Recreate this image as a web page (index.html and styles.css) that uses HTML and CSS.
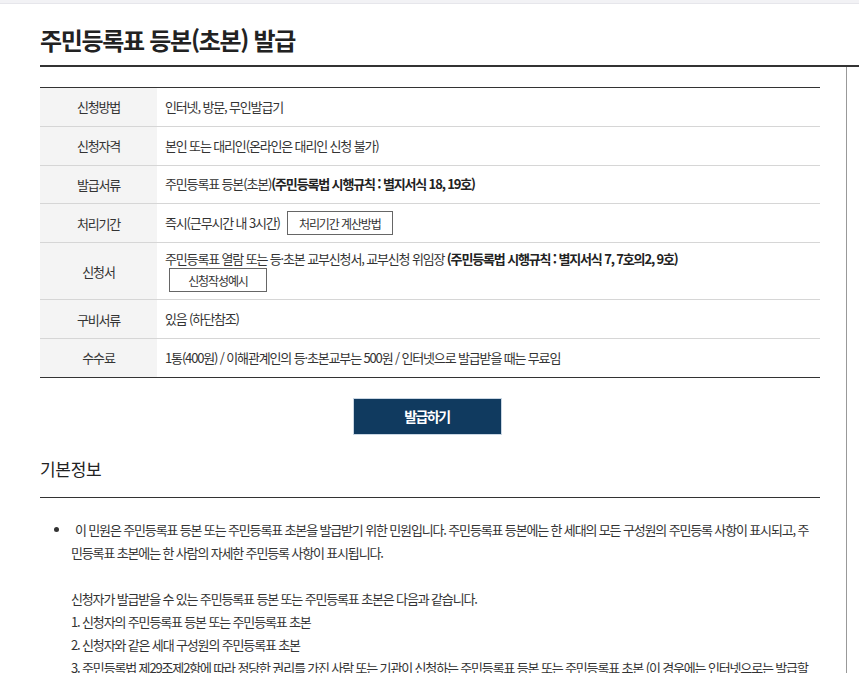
FILE: index.html
```html
<!DOCTYPE html>
<html lang="ko">
<head>
<meta charset="utf-8">
<title>주민등록표 등본(초본) 발급</title>
<link rel="stylesheet" href="styles.css">
</head>
<body>
<div class="topbar"></div>
<header class="page-head">
  <h1 class="page-title">주민등록표 등본(초본) 발급</h1>
</header>
<main class="main">
  <div class="content">
    <div class="info-table">
      <div class="row">
        <div class="label">신청방법</div>
        <div class="value">인터넷, 방문, 무인발급기</div>
      </div>
      <div class="row">
        <div class="label">신청자격</div>
        <div class="value">본인 또는 대리인(온라인은 대리인 신청 불가)</div>
      </div>
      <div class="row">
        <div class="label">발급서류</div>
        <div class="value">주민등록표 등본(초본) <b>(주민등록법 시행규칙 : 별지서식 18, 19호)</b></div>
      </div>
      <div class="row">
        <div class="label">처리기간</div>
        <div class="value">즉시(근무시간 내 3시간) <button class="btn-line btn-calc">처리기간 계산방법</button></div>
      </div>
      <div class="row row-tall">
        <div class="label">신청서</div>
        <div class="value value-stack">
          <div>주민등록표 열람 또는 등·초본 교부신청서, 교부신청 위임장 <b>(주민등록법 시행규칙 : 별지서식 7, 7호의2, 9호)</b></div>
          <button class="btn-line btn-sample">신청작성예시</button>
        </div>
      </div>
      <div class="row">
        <div class="label">구비서류</div>
        <div class="value">있음 (하단참조)</div>
      </div>
      <div class="row row-last">
        <div class="label">수수료</div>
        <div class="value">1통(400원) / 이해관계인의 등·초본교부는 500원 / 인터넷으로 발급받을 때는 무료임</div>
      </div>
    </div>

    <div class="action">
      <button class="btn-issue">발급하기</button>
    </div>

    <h2 class="section-title">기본정보</h2>
    <ul class="info-list">
      <li>이 민원은 주민등록표 등본 또는 주민등록표 초본을 발급받기 위한 민원입니다. 주민등록표 등본에는 한 세대의 모든 구성원의 주민등록 사항이 표시되고, 주민등록표 초본에는 한 사람의 자세한 주민등록 사항이 표시됩니다.<br><br>신청자가 발급받을 수 있는 주민등록표 등본 또는 주민등록표 초본은 다음과 같습니다.<br>1. 신청자의 주민등록표 등본 또는 주민등록표 초본<br>2. 신청자와 같은 세대 구성원의 주민등록표 초본<br>3. 주민등록법 제29조제2항에 따라 정당한 권리를 가진 사람 또는 기관이 신청하는 주민등록표 등본 또는 주민등록표 초본 (이 경우에는 인터넷으로는 발급할 수 없습니다.)</li>
    </ul>
  </div>
</main>
</body>
</html>
```

FILE: styles.css
```css
html, body {
  margin: 0;
  padding: 0;
  background: #fff;
  overflow: hidden;
}
body {
  font-family: "Noto Sans CJK KR", "Noto Sans", sans-serif;
  color: #333;
  font-size: 13px;
  letter-spacing: -1.15px;
}
.topbar {
  height: 3px;
  background: #f2f2f5;
  border-bottom: 1px solid #e6e6eb;
}
.page-head {
  margin-left: 40px;
  border-bottom: 2px solid #333;
  height: 61px;
  box-sizing: content-box;
}
.page-title {
  margin: 0;
  padding-top: 18px;
  font-size: 24px;
  line-height: 36px;
  font-weight: 700;
  letter-spacing: -1.3px;
  color: #222;
}
.main {
  width: 846px;
  border-right: 1px solid #999;
  min-height: 620px;
}
.content {
  margin-left: 40px;
  width: 780px;
  padding-top: 20px;
}
.info-table {
  border-top: 1px solid #333;
}
.row {
  display: flex;
  border-bottom: 1px solid #d6d6d6;
  min-height: 37.8px;
}
.row-last {
  border-bottom: 1px solid #333;
}
.label {
  width: 117px;
  flex: none;
  background: #f4f4f4;
  display: flex;
  align-items: center;
  justify-content: center;
  color: #333;
}
.value {
  flex: 1;
  display: flex;
  align-items: center;
  padding-left: 8px;
  line-height: 18px;
}
.value b {
  font-weight: 700;
  color: #222;
}
.row-tall .value-stack {
  flex-direction: column;
  align-items: flex-start;
  justify-content: center;
  padding-top: 7px;
  padding-bottom: 7px;
}
.btn-line {
  font-family: inherit;
  font-size: 12px;
  letter-spacing: -1.1px;
  color: #333;
  background: #fff;
  border: 1px solid #666;
  height: 24px;
  padding: 0;
  cursor: pointer;
}
.btn-calc {
  width: 106px;
  margin-left: 7px;
}
.btn-sample {
  width: 98px;
  margin-left: 4px;
}
.action {
  display: flex;
  justify-content: center;
  padding-top: 20px;
  padding-right: 6px;
}
.btn-issue {
  width: 149px;
  height: 37px;
  background: #103a5f;
  border: 1px solid #c9d6e3;
  color: #fff;
  font-family: inherit;
  font-size: 14px;
  font-weight: 700;
  letter-spacing: -1.5px;
  padding: 0;
}
.section-title {
  margin: 21px 0 0;
  font-size: 17px;
  line-height: 26px;
  font-weight: 400;
  letter-spacing: -0.3px;
  color: #222;
  padding-bottom: 15px;
  border-bottom: 1px solid #333;
}
.info-list {
  margin: 20px 0 0;
  padding-left: 31px;
  padding-right: 10px;
  line-height: 23px;
  color: #333;
}
.info-list li {
  text-indent: 4px;
}
```
